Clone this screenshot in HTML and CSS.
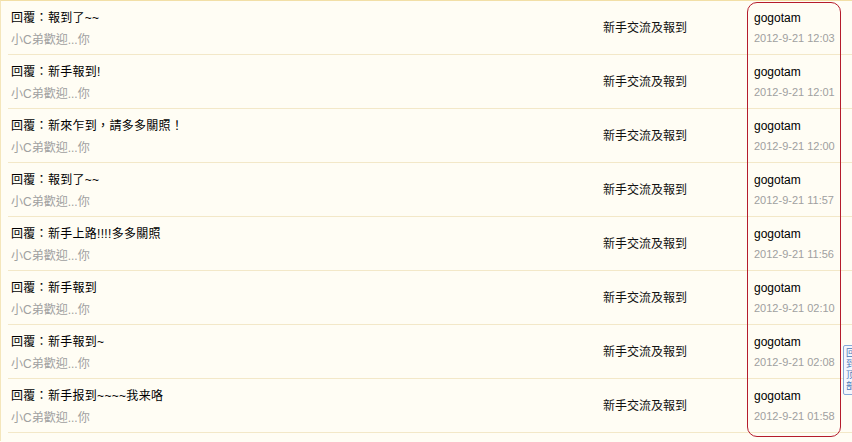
FILE: index.html
```html
<!DOCTYPE html>
<html>
<head>
<meta charset="utf-8">
<link rel="stylesheet" href="styles.css">
</head>
<body>
<div class="list">
  <div class="row">
    <div class="topic"><div class="title">回覆：報到了~~</div><div class="sub">小C弟歡迎...你</div></div>
    <div class="forum">新手交流及報到</div>
    <div class="author"><div class="name">gogotam</div><div class="date">2012-9-21 12:03</div></div>
  </div>
  <div class="row">
    <div class="topic"><div class="title">回覆：新手報到!</div><div class="sub">小C弟歡迎...你</div></div>
    <div class="forum">新手交流及報到</div>
    <div class="author"><div class="name">gogotam</div><div class="date">2012-9-21 12:01</div></div>
  </div>
  <div class="row">
    <div class="topic"><div class="title">回覆：新來乍到，請多多關照！</div><div class="sub">小C弟歡迎...你</div></div>
    <div class="forum">新手交流及報到</div>
    <div class="author"><div class="name">gogotam</div><div class="date">2012-9-21 12:00</div></div>
  </div>
  <div class="row">
    <div class="topic"><div class="title">回覆：報到了~~</div><div class="sub">小C弟歡迎...你</div></div>
    <div class="forum">新手交流及報到</div>
    <div class="author"><div class="name">gogotam</div><div class="date">2012-9-21 11:57</div></div>
  </div>
  <div class="row">
    <div class="topic"><div class="title">回覆：新手上路!!!!多多關照</div><div class="sub">小C弟歡迎...你</div></div>
    <div class="forum">新手交流及報到</div>
    <div class="author"><div class="name">gogotam</div><div class="date">2012-9-21 11:56</div></div>
  </div>
  <div class="row">
    <div class="topic"><div class="title">回覆：新手報到</div><div class="sub">小C弟歡迎...你</div></div>
    <div class="forum">新手交流及報到</div>
    <div class="author"><div class="name">gogotam</div><div class="date">2012-9-21 02:10</div></div>
  </div>
  <div class="row">
    <div class="topic"><div class="title">回覆：新手報到~</div><div class="sub">小C弟歡迎...你</div></div>
    <div class="forum">新手交流及報到</div>
    <div class="author"><div class="name">gogotam</div><div class="date">2012-9-21 02:08</div></div>
  </div>
  <div class="row">
    <div class="topic"><div class="title">回覆：新手报到~~~~我来咯</div><div class="sub">小C弟歡迎...你</div></div>
    <div class="forum">新手交流及報到</div>
    <div class="author"><div class="name">gogotam</div><div class="date">2012-9-21 01:58</div></div>
  </div>
  <div class="highlight"></div>
  <div class="totop">回到顶部</div>
</div>
</body>
</html>
```
FILE: styles.css
```css
html, body {
  margin: 0;
  padding: 0;
  background: #fffdf4;
}
body {
  width: 852px;
  height: 442px;
  overflow: hidden;
  font-family: "Liberation Sans", "Noto Sans CJK TC", sans-serif;
  font-size: 12px;
  color: #000;
}
.list {
  position: relative;
  border-top: 1px solid #f2dfa6;
  border-left: 1px solid #f4e6bb;
  height: 441px;
  box-sizing: border-box;
}
.row {
  display: grid;
  grid-template-columns: 595px 151px 1fr;
  height: 54px;
  box-sizing: border-box;
  margin-left: 7px;
  border-bottom: 1px solid #f3e8c8;
}
.topic {
  padding-top: 6px;
  margin-left: 3px;
}
.title {
  line-height: 22px;
  white-space: nowrap;
  letter-spacing: 0.3px;
}
.sub {
  line-height: 23px;
  color: #a0a0a0;
}
.forum {
  align-self: center;
  line-height: 20px;
  color: #111;
}
.author {
  padding-top: 6px;
}
.name {
  line-height: 22px;
}
.date {
  font-size: 11px;
  line-height: 19px;
  color: #a0a0a0;
}
.highlight {
  position: absolute;
  left: 746px;
  top: 1px;
  width: 94px;
  height: 435px;
  box-sizing: border-box;
  border: 1.5px solid #b51c2c;
  border-radius: 10px;
}
.totop {
  position: absolute;
  left: 842px;
  top: 344px;
  width: 18px;
  height: 50px;
  box-sizing: border-box;
  border: 1px solid #87a9d8;
  border-radius: 2px;
  background: #f3f7fd;
  color: #4a78b8;
  font-size: 9px;
  line-height: 11px;
  padding: 2px 0 0 2px;
  overflow: hidden;
}
```
